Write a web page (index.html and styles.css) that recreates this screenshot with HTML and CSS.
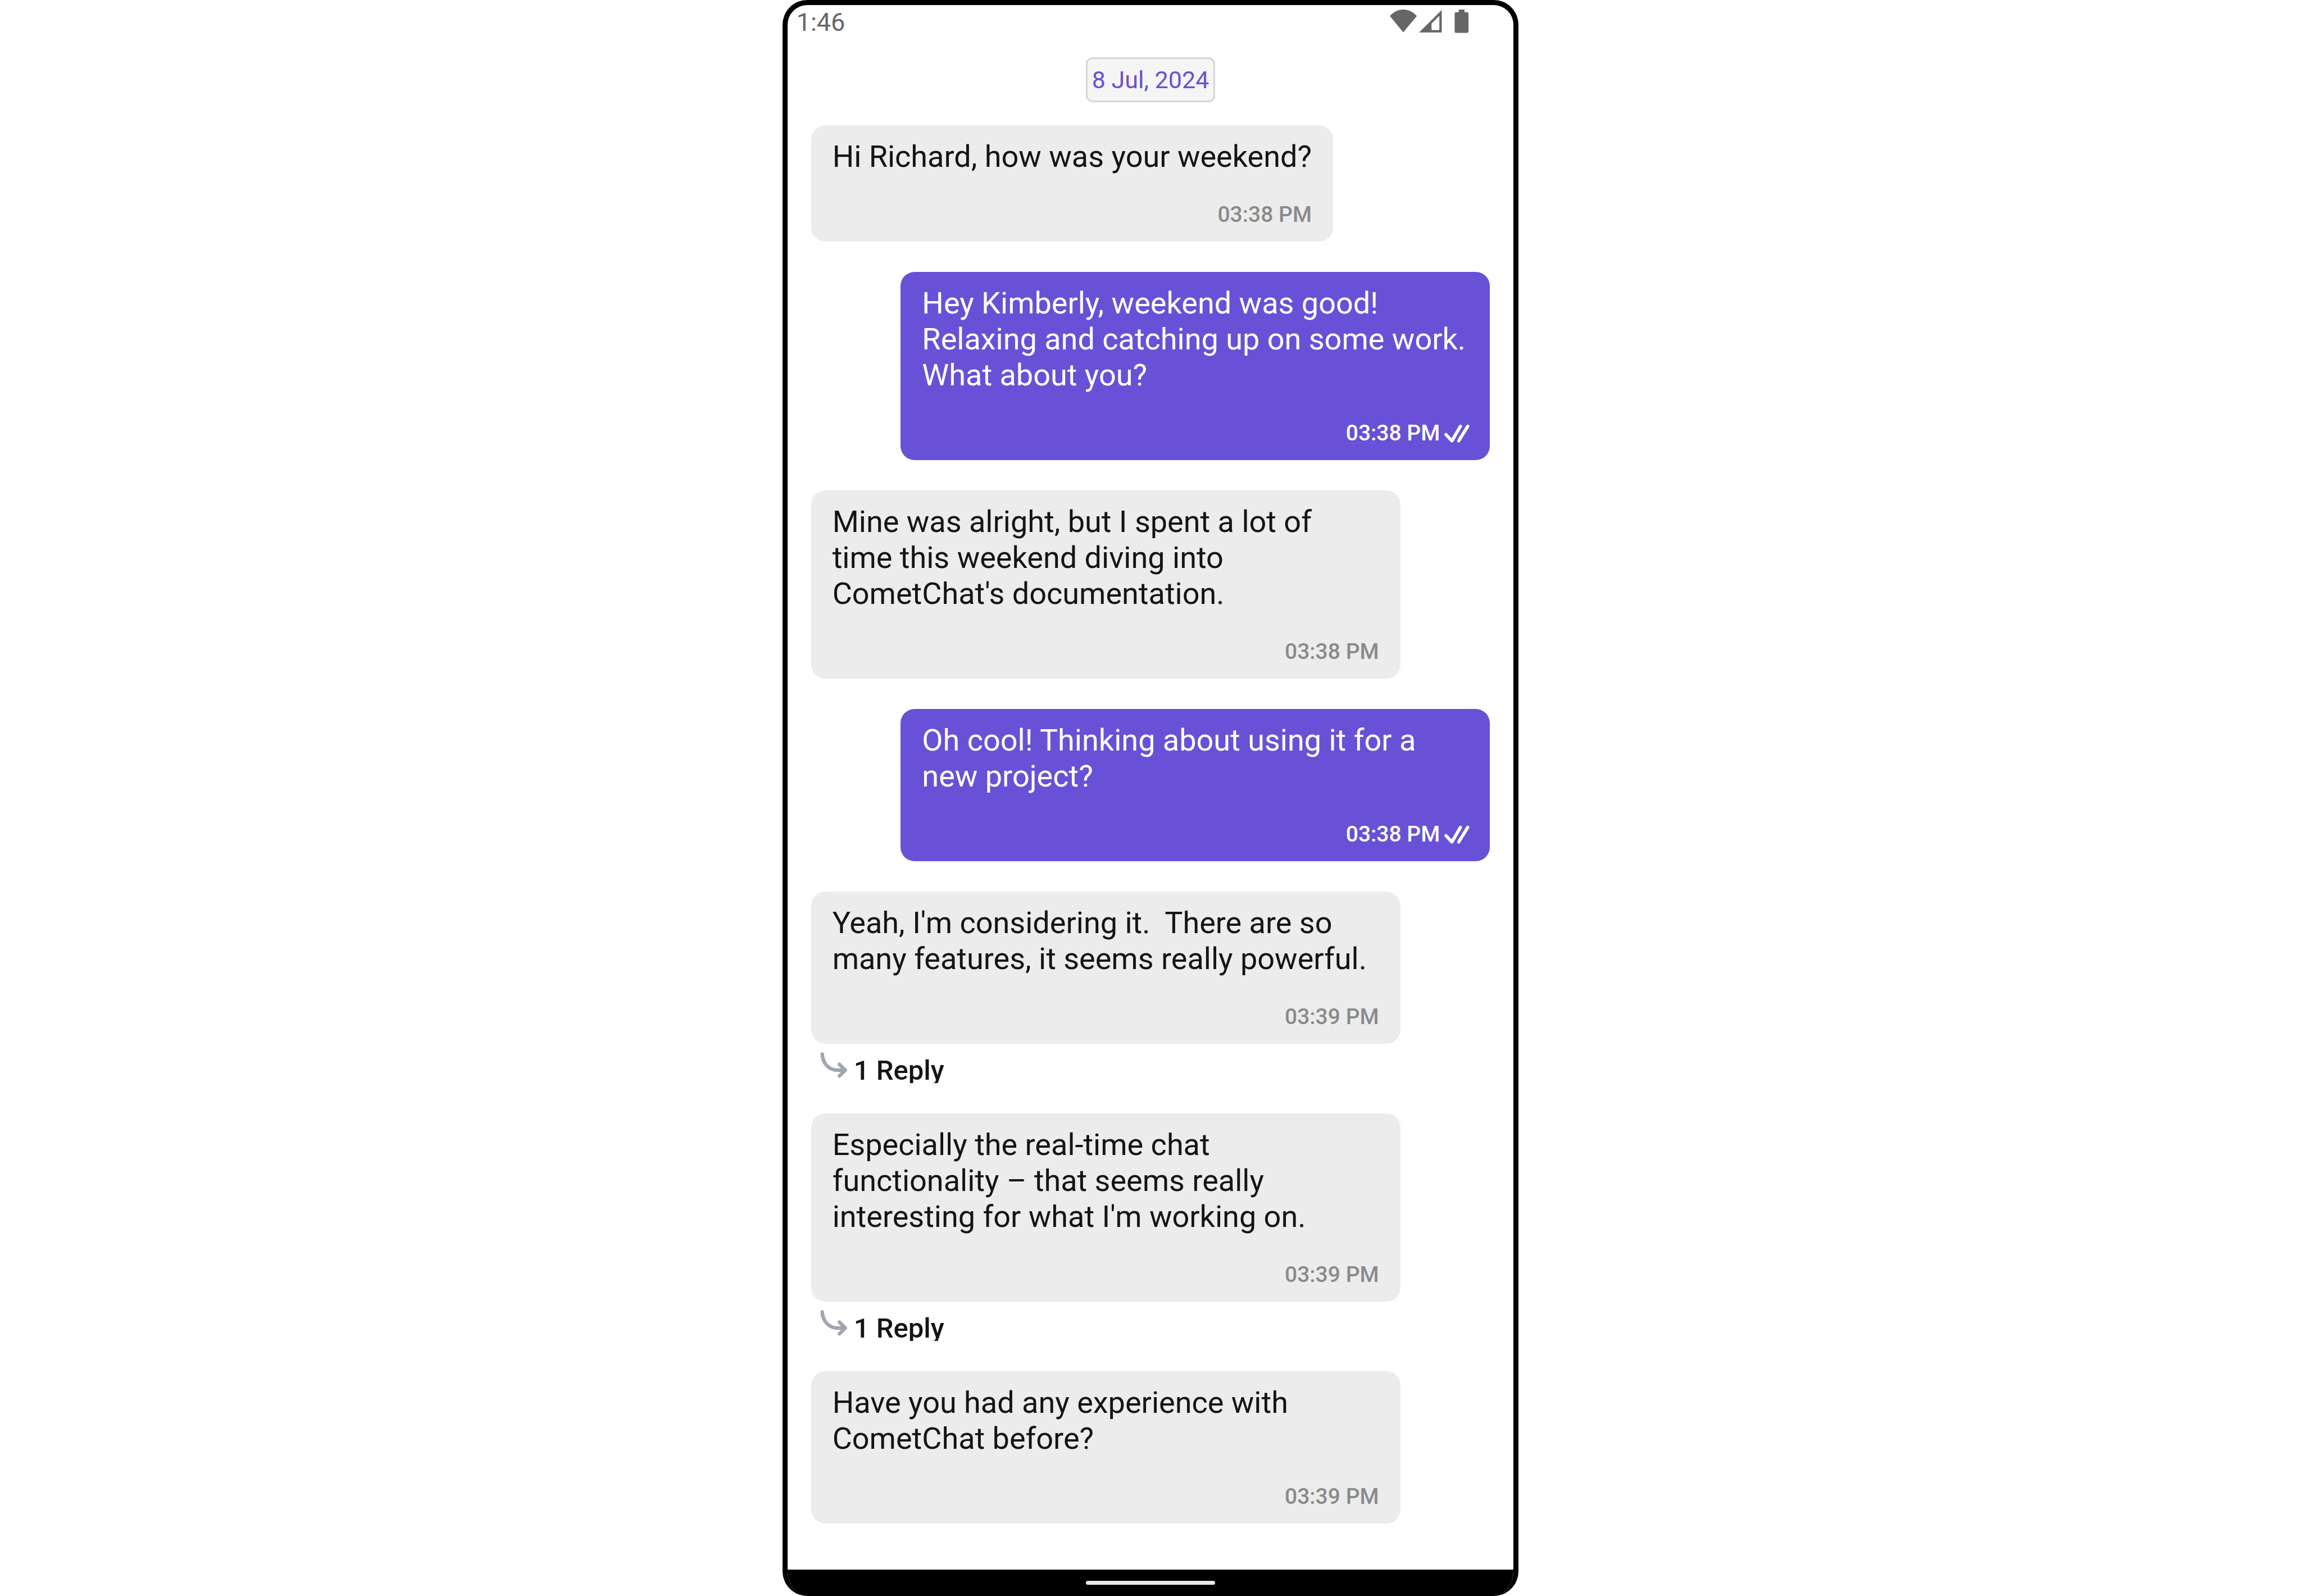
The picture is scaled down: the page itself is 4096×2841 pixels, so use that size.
FILE: index.html
```html
<!DOCTYPE html>
<html lang="en">
<head>
<meta charset="utf-8">
<title>Chat</title>
<meta name="viewport" content="width=device-width, initial-scale=1">
<link rel="stylesheet" href="styles.css">
</head>
<body>
<svg class="sprite" aria-hidden="true">
  <symbol id="read" viewBox="795 142 149 108">
    <path d="M805 203L840 240L890 154M880 240L933 154" fill="none" stroke="currentColor" stroke-width="19" stroke-linecap="round" stroke-linejoin="round"/>
  </symbol>
  <symbol id="thread" viewBox="126 231 160 152">
    <path d="M138 242C142 304 184 337 230 337H272M240 302L275 337L240 371" fill="none" stroke="currentColor" stroke-width="21" stroke-linecap="round" stroke-linejoin="round"/>
  </symbol>
</svg>
<div class="phone">
  <header class="status-bar">
    <time class="clock">1:46</time>
    <svg class="status-icons" viewBox="351 57 462 138" role="img" aria-label="Wi-Fi, signal and battery">
      <path d="M351 95C372 71 400 57 430 57S489 71 510 95L430 190Z"/>
      <path fill-rule="evenodd" d="M523 191L656 59V191ZM596 139V177H642V93Z"/>
      <path d="M756 57H790V72H804Q813 72 813 81V185Q813 194 804 194H741Q732 194 732 185V81Q732 72 741 72H756Z"/>
    </svg>
  </header>
  <main class="messages">
    <time class="date">8 Jul, 2024</time>
    <article class="message">
      <div class="bubble">
        <p class="text">Hi Richard, how was your weekend?</p>
        <footer class="meta"><time>03:38 PM</time></footer>
      </div>
    </article>
    <article class="message sent">
      <div class="bubble">
        <p class="text">Hey Kimberly, weekend was good! Relaxing and catching up on some work. What about you?</p>
        <footer class="meta"><time>03:38 PM</time><svg class="read" role="img" aria-label="Read"><use href="#read"/></svg></footer>
      </div>
    </article>
    <article class="message">
      <div class="bubble">
        <p class="text">Mine was alright, but I spent a lot of time this weekend diving into CometChat's documentation.</p>
        <footer class="meta"><time>03:38 PM</time></footer>
      </div>
    </article>
    <article class="message sent">
      <div class="bubble">
        <p class="text">Oh cool! Thinking about using it for a new project?</p>
        <footer class="meta"><time>03:38 PM</time><svg class="read" role="img" aria-label="Read"><use href="#read"/></svg></footer>
      </div>
    </article>
    <article class="message">
      <div class="bubble">
        <p class="text">Yeah, I'm considering it.&nbsp; There are so many features, it seems really powerful.</p>
        <footer class="meta"><time>03:39 PM</time></footer>
      </div>
      <button class="replies" type="button"><svg class="thread" aria-hidden="true"><use href="#thread"/></svg><span>1 Reply</span></button>
    </article>
    <article class="message">
      <div class="bubble">
        <p class="text">Especially the real-time chat functionality – that seems really interesting for what I'm working on.</p>
        <footer class="meta"><time>03:39 PM</time></footer>
      </div>
      <button class="replies" type="button"><svg class="thread" aria-hidden="true"><use href="#thread"/></svg><span>1 Reply</span></button>
    </article>
    <article class="message">
      <div class="bubble">
        <p class="text">Have you had any experience with CometChat before?</p>
        <footer class="meta"><time>03:39 PM</time></footer>
      </div>
    </article>
  </main>
  <div class="nav-bar"><span class="home"></span></div>
</div>
</body>
</html>
```
FILE: styles.css
```css
* {
  box-sizing: border-box;
}

body {
  margin: 0;
  background: #fff;
  color: #141414;
  font-family: Roboto, sans-serif;
}

.sprite {
  display: none;
}

.phone {
  display: flex;
  flex-direction: column;
  width: 32%;
  min-height: 100vh;
  margin: 0 auto;
  overflow: hidden;
  border: 9px solid #000;
  border-bottom: 0;
  border-radius: 44px;
}

.status-bar {
  display: flex;
  justify-content: space-between;
  align-items: flex-start;
  padding: 4px 80px 0 16px;
  color: #666;
}

.clock {
  font-size: 45px;
  line-height: 54px;
}

.status-icons {
  width: 140px;
  height: 42px;
  margin-top: 4px;
  fill: currentColor;
}

.messages {
  display: flex;
  flex: 1;
  flex-direction: column;
  gap: 54px;
  padding: 35px 42px 0;
}

.date {
  align-self: center;
  margin-bottom: -13px;
  padding: 13px 8px;
  border: 3px solid #d6d6d6;
  border-radius: 12px;
  background: #f5f5f5;
  color: #6851d6;
  font-size: 43px;
  line-height: 48px;
}

.message {
  display: flex;
  flex-direction: column;
  align-items: flex-start;
}

.bubble {
  display: flex;
  flex-direction: column;
  gap: 49px;
  max-width: 1049px;
  padding: 24px 38px 26px;
  border-radius: 25px;
  background: #ececec;
}

.sent {
  align-items: flex-end;
}

.sent .bubble {
  padding-right: 36px;
  background: #6851d6;
  color: #fff;
}

.text {
  margin: 0;
  font-size: 54px;
  line-height: 64px;
}

.meta {
  display: flex;
  justify-content: flex-end;
  align-items: center;
  gap: 8px;
  color: #8a8a8a;
  font-size: 39px;
  font-weight: 500;
  line-height: 44px;
}

.sent .meta {
  color: #fff;
}

.read {
  width: 45px;
  height: 33px;
}

.replies {
  display: flex;
  align-items: flex-start;
  gap: 12px;
  height: 70px;
  padding: 15px 16px 0;
  overflow: hidden;
  border: 0;
  background: none;
  color: #141414;
  font: 500 49px/56px Roboto, sans-serif;
}

.replies span {
  padding-top: 5px;
}

.thread {
  width: 48px;
  height: 46px;
  color: #a1a6ad;
}

.nav-bar {
  display: flex;
  justify-content: center;
  align-items: center;
  height: 47px;
  background: #000;
}

.home {
  width: 230px;
  height: 7px;
  border-radius: 4px;
  background: #eaeaea;
}
```
